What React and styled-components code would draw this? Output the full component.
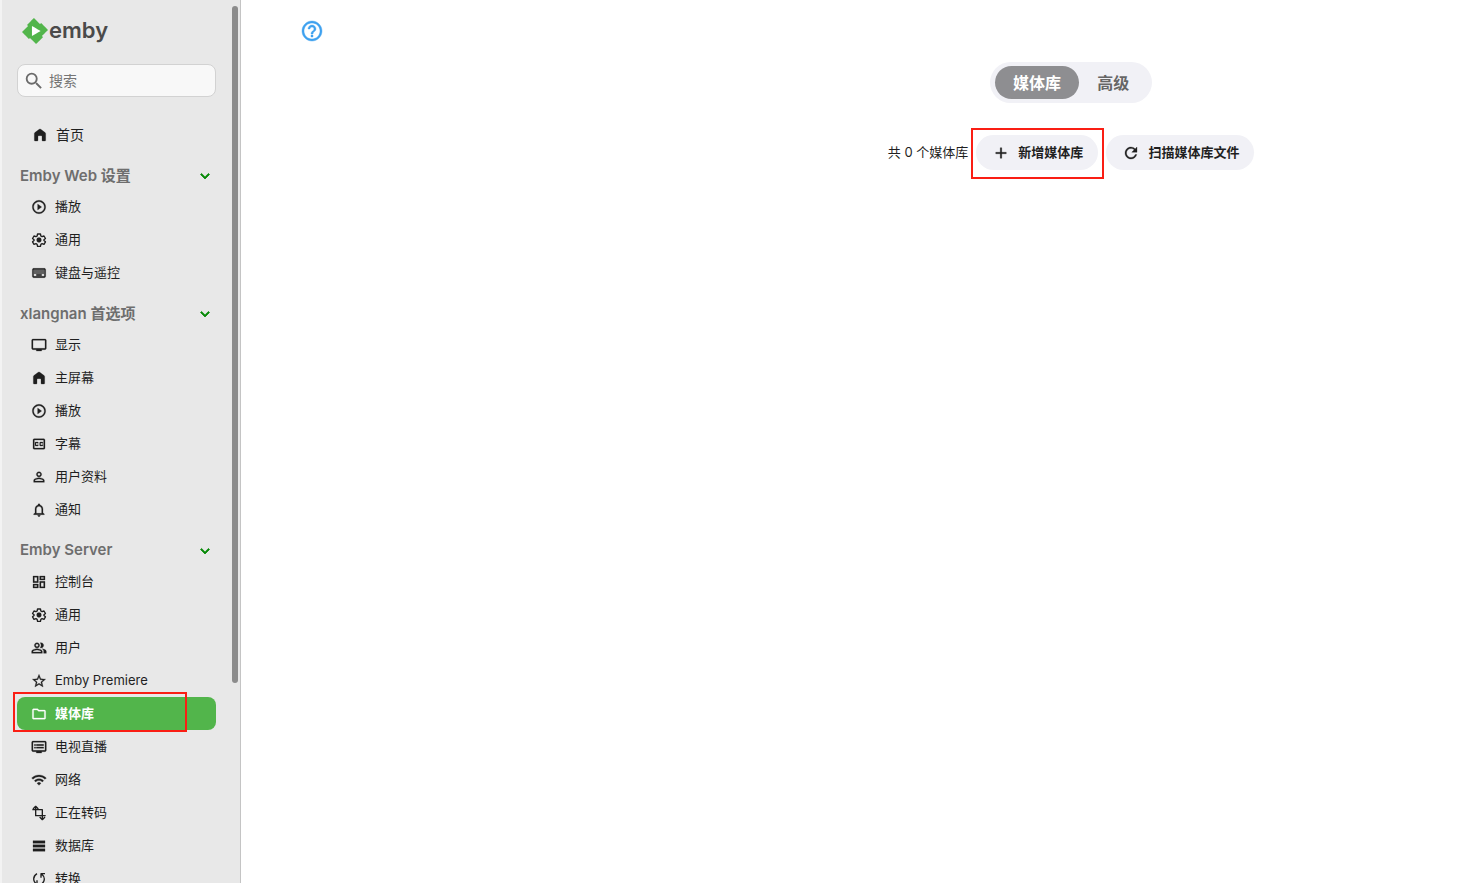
import React, { useState } from 'react';
import styled, { createGlobalStyle, css } from 'styled-components';
import {
  MdAdd,
  MdExpandMore,
  MdHelpOutline,
  MdNotificationsNone,
  MdOutlineClosedCaption,
  MdOutlineDashboard,
  MdOutlineDvr,
  MdOutlineFolder,
  MdOutlineKeyboard,
  MdOutlinePeopleAlt,
  MdOutlineTv,
  MdPersonOutline,
  MdPlayCircleOutline,
  MdRefresh,
  MdSearch,
  MdStarBorder,
  MdWifi
} from 'react-icons/md';

const GlobalStyle = createGlobalStyle`
  * { box-sizing: border-box; }
  body {
    margin: 0;
    background: #fff;
    color: #1f1f1f;
    font-family: Inter, "Noto Sans CJK SC", sans-serif;
    font-size: 13px;
  }
  button, input { font: inherit; color: inherit; }
`

// slightly heavier icons; the packaged ones carry an empty bounding path that must stay unstroked
const heavyIcon = css`
  svg {
    flex: none;
    stroke: currentColor;
    stroke-width: ${({ $stroke = 0.4 }) => $stroke}px;
  }
  svg path[fill="none"]:not([stroke]) { stroke: none; }
`

const Layout = styled.div`
  display: flex;
  height: 100vh;
  overflow: hidden;
`

const Sidebar = styled.aside`
  display: flex;
  flex: none;
  width: 241px;
  background: #e8e8e8;
  border-left: 2px solid #f3f3f3;
  border-right: 1px solid #c4c4c4;
`

const SidebarContent = styled.div`
  flex: 1;
  padding: 16px 16px 0 15px;
  overflow: hidden;
`

const ScrollThumb = styled.div`
  width: 6px;
  height: 677px;
  margin: 6px 2px 0 0;
  border-radius: 3px;
  background: #8c8c8c;
`

const Logo = styled.a`
  display: flex;
  align-items: center;
  gap: 1px;
  height: 30px;
  padding-left: 5px;
  color: #4a4a4a;
  font: 600 22px/28px Inter, sans-serif;
  text-decoration: none;
`

const Label = styled.span`
  padding-bottom: 2px;
`

const SearchBox = styled.label`
  display: flex;
  align-items: center;
  gap: 4px;
  height: 33px;
  margin: 18px 0 21px;
  padding: 0 5px;
  border: 1px solid #d2d2d2;
  border-radius: 8px;
  background: #f8f8f8;
  color: #6b6b6b;

  svg { flex: none; }
`

const SearchInput = styled.input`
  flex: 1;
  min-width: 0;
  padding: 0;
  border: 0;
  outline: 0;
  background: transparent;
  font-size: 14px;

  &::placeholder { color: #757575; opacity: 1; }
`

const NavLink = styled.a`
  position: relative;
  display: flex;
  align-items: center;
  gap: 8px;
  height: 33px;
  padding-left: ${({ $home }) => $home ? 15 : 14}px;
  border-radius: 8px;
  background: ${({ $active }) => $active ? '#52b54b' : 'transparent'};
  color: ${({ $active }) => $active ? '#fff' : '#1f1f1f'};
  font-size: ${({ $home }) => $home ? 14 : 13}px;
  font-weight: ${({ $active }) => $active ? 600 : 400};
  text-decoration: none;
  ${heavyIcon}
`

const SectionToggle = styled.button`
  display: flex;
  align-items: center;
  justify-content: space-between;
  width: 100%;
  height: 29px;
  margin-top: 10px;
  padding: 0 2px 0 3px;
  border: 0;
  background: none;
  color: #6e6e6e;
  font-size: 15px;
  font-weight: 600;
  cursor: pointer;
  ${heavyIcon}

  svg { color: #078a07; }
`

const Main = styled.main`
  flex: 1;
  min-width: 0;
`

const TopBar = styled.header`
  display: flex;
  align-items: center;
  height: 62px;
  padding-left: 59px;
`

const HelpLink = styled.a`
  display: flex;
  color: #3ea1ef;
  ${heavyIcon}
`

const Panel = styled.section`
  display: flex;
  flex-direction: column;
  align-items: center;
  gap: 32px;
  padding-left: 34%;
`

const Tabs = styled.div`
  display: flex;
  padding: 4px 5px;
  border-radius: 21px;
  background: #f1f1f6;
`

const Tab = styled.button`
  height: 33px;
  padding: 0 18px 2px;
  border: 0;
  border-radius: 17px;
  background: ${({ $active }) => $active ? '#8e8e91' : 'transparent'};
  color: ${({ $active }) => $active ? '#fff' : '#666'};
  font-size: 16px;
  font-weight: ${({ $active }) => $active ? 700 : 600};
  cursor: pointer;
`

const Toolbar = styled.div`
  display: flex;
  align-items: center;
  gap: 8px;
  white-space: nowrap;
`

const ActionButton = styled.button`
  position: relative;
  display: flex;
  align-items: center;
  gap: 8px;
  height: 35px;
  padding: 0 15px 0 16px;
  border: 0;
  border-radius: 18px;
  background: #f1f1f6;
  font-weight: 700;
  cursor: pointer;
  ${heavyIcon}
`

const Highlight = styled.span`
  position: absolute;
  inset: ${({ $inset }) => $inset};
  border: 2px solid #fa1e14;
  pointer-events: none;
`

const EmbyMark = () => (
  <svg width="26" height="26" viewBox="0 0 24 24" aria-hidden="true">
    <path fill="#fff" d="M8 6h10v12H8z" />
    <path
      fill="#52b54b"
      d="M11.041 0c-.007 0-1.456 1.43-3.219 3.176L4.615 6.352l.512.513.512.512-2.819 2.791L0 12.961l1.83 1.848c1.006 1.016 2.438 2.46 3.182 3.209l1.351 1.359.508-.496c.28-.273.515-.498.524-.498.008 0 1.266 1.264 2.794 2.808L12.97 24l.187-.182c.23-.225 5.007-4.95 5.717-5.656l.52-.516-.502-.513c-.276-.282-.5-.52-.496-.53.003-.009 1.264-1.26 2.802-2.783 1.538-1.522 2.8-2.776 2.803-2.785.005-.012-3.617-3.684-6.107-6.193L17.65 4.6l-.505.505c-.279.278-.517.501-.53.497-.013-.005-1.27-1.267-2.793-2.805A449.655 449.655 0 0 0 11.041 0zM9.223 7.367c.091.038 7.951 4.608 7.957 4.627.003.013-1.781 1.056-3.965 2.32a999.898 999.898 0 0 1-3.996 2.307c-.019.006-.026-1.266-.026-4.629 0-3.7.007-4.634.03-4.625Z"
    />
  </svg>
);

const Glyph = ({ size, children }) => (
  <svg width={size} height={size} viewBox="0 0 24 24" fill="currentColor" aria-hidden="true">
    {children}
  </svg>
);

const Line = ({ d }) => (
  <path d={d} fill="none" stroke="currentColor" strokeWidth="2" strokeLinejoin="round" />
);

const HomeIcon = ({ size }) => (
  <Glyph size={size}>
    <path d="M3.500 20V10q0-1 .8-1.600l6.500-5q1.200-.8 2.400 0l6.500 5q.8.600.8 1.600v10q0 1-1 1H16q-1 0-1-1v-6q0-1-1-1h-4q-1 0-1 1v6q0 1-1 1H4.500q-1 0-1-1z" />
  </Glyph>
);

const SettingsIcon = ({ size }) => (
  <Glyph size={size}>
    <Line d="M9.800 3h4.400l.6 3 1.800 1 2.900-1 2.200 3.800-2.300 2v1l2.300 2-2.200 3.700-2.900-1-1.800 1-.6 3H9.800l-.6-3-1.800-1-2.900 1-2.200-3.700 2.300-2v-1l-2.300-2L4.500 6l2.900 1 1.800-1z" />
    <circle cx="12" cy="12" r="3.600" />
  </Glyph>
);

const TransformIcon = ({ size }) => (
  <Glyph size={size}>
    <Line d="M7 3v13h15M2 7h15v14M3 6l4-4 4 4M13 18l4 4 4-4" />
  </Glyph>
);

const StorageIcon = ({ size }) => (
  <Glyph size={size}>
    <path d="M3 4h18v4H3zM3 10h18v4H3zM3 16h18v4H3z" />
  </Glyph>
);

const SyncIcon = ({ size }) => (
  <Glyph size={size}>
    <Line d="M9 4Q4 7 4 12q0 4 4 7.500M3 20h6v-6M15 20q5-3 5-8 0-4-4-7.500M21 4h-6v6" />
  </Glyph>
);

const sections = [
  {
    title: 'Emby Web 设置',
    items: [
      { label: '播放', icon: MdPlayCircleOutline },
      { label: '通用', icon: SettingsIcon },
      { label: '键盘与遥控', icon: MdOutlineKeyboard }
    ]
  },
  {
    title: 'xlangnan 首选项',
    items: [
      { label: '显示', icon: MdOutlineTv },
      { label: '主屏幕', icon: HomeIcon },
      { label: '播放', icon: MdPlayCircleOutline },
      { label: '字幕', icon: MdOutlineClosedCaption },
      { label: '用户资料', icon: MdPersonOutline },
      { label: '通知', icon: MdNotificationsNone }
    ]
  },
  {
    title: 'Emby Server',
    items: [
      { label: '控制台', icon: MdOutlineDashboard },
      { label: '通用', icon: SettingsIcon },
      { label: '用户', icon: MdOutlinePeopleAlt },
      { label: 'Emby Premiere', icon: MdStarBorder },
      { label: '媒体库', icon: MdOutlineFolder, active: true },
      { label: '电视直播', icon: MdOutlineDvr },
      { label: '网络', icon: MdWifi },
      { label: '正在转码', icon: TransformIcon },
      { label: '数据库', icon: StorageIcon },
      { label: '转换', icon: SyncIcon }
    ]
  }
];

const NavSection = ({ title, items }) => {
  const [open, setOpen] = useState(true);

  return (
    <>
      <SectionToggle $stroke={1} aria-expanded={open} onClick={() => setOpen(!open)}>
        <Label>{title}</Label>
        <MdExpandMore size={18} />
      </SectionToggle>
      {open && items.map(({ label, icon: Icon, active }) => (
        <NavLink key={label} href="#" $active={active} aria-current={active ? 'page' : undefined}>
          <Icon size={16} />
          <Label>{label}</Label>
          {active && <Highlight $inset="-5px 29px -2px -4px" />}
        </NavLink>
      ))}
    </>
  );
}

const App = () => {
  const [tab, setTab] = useState('媒体库');

  return (
    <>
      <GlobalStyle />
      <Layout>
        <Sidebar>
          <SidebarContent>
            <Logo href="#"><EmbyMark /><Label>emby</Label></Logo>
            <SearchBox>
              <MdSearch size={22} />
              <SearchInput type="search" placeholder="搜索" aria-label="搜索" />
            </SearchBox>
            <nav>
              <NavLink href="#" $home><HomeIcon size={16} /><Label>首页</Label></NavLink>
              {sections.map((section) => <NavSection key={section.title} {...section} />)}
            </nav>
          </SidebarContent>
          <ScrollThumb />
        </Sidebar>
        <Main>
          <TopBar>
            <HelpLink href="#" aria-label="帮助"><MdHelpOutline size={24} /></HelpLink>
          </TopBar>
          <Panel>
            <Tabs role="tablist">
              {['媒体库', '高级'].map((name) => (
                <Tab key={name} role="tab" aria-selected={tab === name} $active={tab === name} onClick={() => setTab(name)}>
                  {name}
                </Tab>
              ))}
            </Tabs>
            <Toolbar>
              <Label>共 0 个媒体库</Label>
              <ActionButton>
                <MdAdd size={18} />
                <Label>新增媒体库</Label>
                <Highlight $inset="-7px -6px -9px -5px" />
              </ActionButton>
              <ActionButton><MdRefresh size={18} /><Label>扫描媒体库文件</Label></ActionButton>
            </Toolbar>
          </Panel>
        </Main>
      </Layout>
    </>
  );
}

export default App;
